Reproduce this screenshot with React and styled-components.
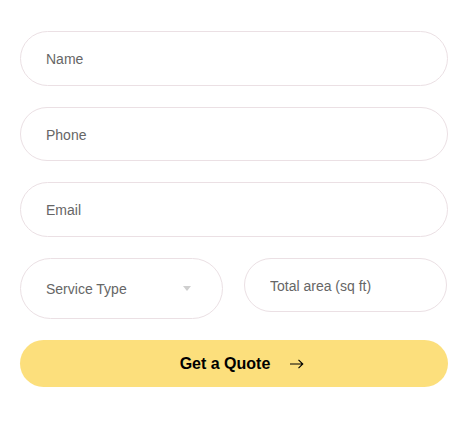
import React from "react";
import styled, { createGlobalStyle } from "styled-components";

const GlobalStyle = createGlobalStyle`
	body {
		margin: 0;
		background: #ffffff;
		font-family: "Liberation Sans", Arial, sans-serif;
	}
`;

const App = () => {
	return (
		<>
			<GlobalStyle />
			<QuoteForm onSubmit={(e) => e.preventDefault()}>
				<Field type="text" placeholder="Name" />
				<Field type="tel" placeholder="Phone" />
				<Field type="email" placeholder="Email" />
				<Row>
					<SelectBox>
						<span>Service Type</span>
						<Caret />
					</SelectBox>
					<Field type="text" placeholder="Total area (sq ft)" />
				</Row>
				<SubmitButton type="submit">
					Get a Quote
					<svg width="14" height="10" viewBox="0 0 14 10" fill="none">
						<path
							d="M0 5h13M8.5 0.8L12.8 5L8.5 9.2"
							stroke="#000"
							strokeWidth="1.1"
						/>
					</svg>
				</SubmitButton>
			</QuoteForm>
		</>
	);
};

export default App;

const QuoteForm = styled.form`
	width: 428px;
	margin: 31px 0 0 20px;
	display: flex;
	flex-direction: column;
	gap: 21px;
`;

const Field = styled.input`
	box-sizing: border-box;
	width: 100%;
	height: 54.5px;
	padding: 2px 25px 0;
	border: 1px solid #ebe0e4;
	border-radius: 28px;
	background: #fff;
	font-family: "Liberation Sans", Arial, sans-serif;
	font-size: 14px;
	color: #333;
	outline: none;

	&::placeholder {
		color: #666;
	}
`;

const Row = styled.div`
	display: grid;
	grid-template-columns: 203px 203px;
	gap: 21px;
	align-items: start;
`;

const SelectBox = styled.div`
	box-sizing: border-box;
	height: 61px;
	padding: 2px 31px 0 25px;
	border: 1px solid #ebe0e4;
	border-radius: 31px;
	display: flex;
	align-items: center;
	justify-content: space-between;
	font-size: 14px;
	color: #666;
`;

const Caret = styled.span`
	width: 0;
	height: 0;
	border-left: 4px solid transparent;
	border-right: 4px solid transparent;
	border-top: 5px solid #cfcfcf;
	margin-top: -1px;
`;

const SubmitButton = styled.button`
	height: 47px;
	width: 100%;
	border: none;
	border-radius: 24px;
	background: #fcdf7c;
	padding: 2px 0 0 16px;
	display: flex;
	align-items: center;
	justify-content: center;
	gap: 20px;
	font-family: "Liberation Sans", Arial, sans-serif;
	font-size: 16px;
	font-weight: bold;
	color: #000;
	cursor: pointer;
`;
